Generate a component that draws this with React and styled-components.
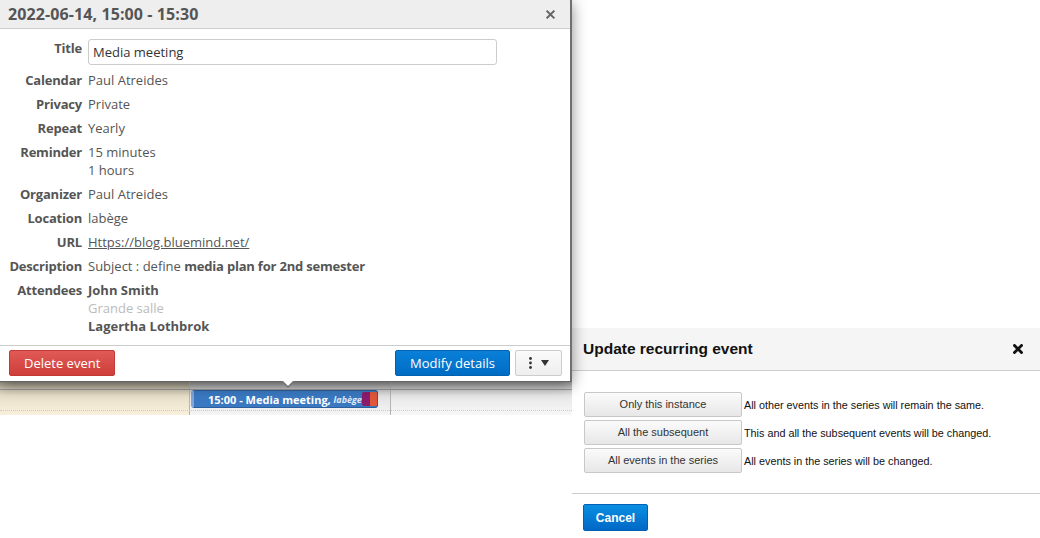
import React from 'react'
import styled, { createGlobalStyle } from 'styled-components'

const GlobalStyle = createGlobalStyle`
    html, body {
        margin: 0;
        padding: 0;
        background: #ffffff;
    }
    * {
        box-sizing: border-box;
    }
`

const Page = styled.div`
    display: flex;
    align-items: flex-start;
    width: 1040px;
    height: 538px;
    overflow: hidden;
`
const LeftCol = styled.div`
    width: 572px;
    display: flex;
    flex-direction: column;
`
const Popup = styled.div`
    position: relative;
    z-index: 2;
    width: 572px;
    background: #ffffff;
    border-right: 2px solid #707070;
    border-bottom: 1px solid #666666;
    box-shadow: 0 3px 14px rgba(0, 0, 0, 0.45);
    font-family: "Open Sans", sans-serif;
    font-size: 13px;
    color: #555555;
`
const PopupHeader = styled.div`
    height: 29px;
    display: flex;
    align-items: center;
    justify-content: space-between;
    padding: 0 15px 0 8px;
    background: #eeeeee;
    border-bottom: 1px solid #cccccc;
`
const PopupTitle = styled.div`
    font-size: 16px;
    font-weight: 700;
    color: #555555;
    letter-spacing: 0.1px;
`
const PopupBody = styled.div`
    display: grid;
    grid-template-columns: 82px 1fr;
    column-gap: 6px;
    row-gap: 6px;
    padding: 10px 0 10px;
`
const Label = styled.div`
    text-align: right;
    font-weight: 700;
    line-height: 18px;
    letter-spacing: -0.2px;
`
const Value = styled.div`
    line-height: 18px;
    display: flex;
    flex-direction: column;
`
const Line = styled.span`
    color: ${p => (p.$muted ? '#bbbbbb' : '#555555')};
    font-weight: ${p => (p.$bold ? 700 : 400)};
`
const Strong = styled.b`
    font-weight: 700;
    letter-spacing: -0.2px;
`
const Link = styled.a`
    color: #555555;
    text-decoration: underline;
`
const TitleInput = styled.input`
    width: 409px;
    height: 26px;
    border: 1px solid #cccccc;
    border-radius: 3px;
    padding: 0 4px;
    font-family: "Open Sans", sans-serif;
    font-size: 13px;
    color: #333333;
    outline: none;
`
const PopupFooter = styled.div`
    display: flex;
    align-items: center;
    gap: 5px;
    padding: 4px 8px 5px 9px;
    border-top: 1px solid #cccccc;
`
const Spacer = styled.div`
    flex: 1;
`
const ActionButton = styled.button`
    height: 26px;
    padding: 0 14px;
    border-radius: 2px;
    font-family: "Open Sans", sans-serif;
    font-size: 13px;
    color: #ffffff;
    cursor: pointer;
    border: 1px solid ${p => (p.$tone === 'danger' ? '#c23a36' : '#0061b0')};
    background: ${p => (p.$tone === 'danger'
        ? 'linear-gradient(#e05a56, #cf3e3a)'
        : 'linear-gradient(#0a80d8, #006cc4)')};
`
const MoreButton = styled.button`
    width: 47px;
    height: 26px;
    display: flex;
    align-items: center;
    justify-content: center;
    gap: 9px;
    border: 1px solid #cccccc;
    border-radius: 2px;
    background: linear-gradient(#fafafa, #eeeeee);
    padding: 0;
`
const Notch = styled.div`
    position: absolute;
    left: 281px;
    bottom: -7px;
    width: 0;
    height: 0;
    border-left: 7px solid transparent;
    border-right: 7px solid transparent;
    border-top: 7px solid #707070;
    &::after {
        content: '';
        position: absolute;
        left: -6px;
        top: -8px;
        border-left: 6px solid transparent;
        border-right: 6px solid transparent;
        border-top: 6px solid #ffffff;
    }
`
const CloseIcon = styled.svg`
    display: block;
`

const Strip = styled.div`
    position: relative;
    z-index: 1;
    height: 33px;
    display: grid;
    grid-template-columns: 190px 201px 1fr;
    &::before {
        content: '';
        position: absolute;
        left: 0;
        right: 0;
        top: 7px;
        border-top: 1px solid #9a9a9a;
    }
    &::after {
        content: '';
        position: absolute;
        left: 0;
        right: 0;
        top: 28px;
        border-top: 1px dotted #cccccc;
    }
`
const StripCell = styled.div`
    background: ${p => p.$bg};
    border-right: ${p => (p.$last ? 'none' : '1px solid #b5b5b5')};
    padding-top: 8px;
`
const EventChip = styled.div`
    position: relative;
    z-index: 1;
    margin-left: 1px;
    width: 187px;
    height: 18px;
    display: flex;
    align-items: center;
    border: 1px solid #2b5f9c;
    border-left: 3px solid #7fa6d6;
    border-radius: 3px;
    background: #3a79c2;
    color: #ffffff;
    font-family: "Open Sans", sans-serif;
    font-size: 11px;
    font-weight: 700;
    padding-left: 14px;
    white-space: nowrap;
    overflow: hidden;
`
const ChipPlace = styled.i`
    font-size: 9px;
    font-weight: 700;
    opacity: 0.85;
`
const ChipColors = styled.div`
    margin-left: auto;
    display: flex;
    height: 14px;
    margin-right: 1px;
`
const ChipColor = styled.div`
    width: 8px;
    height: 14px;
    background: ${p => p.$color};
    border-radius: ${p => (p.$last ? '0 2px 2px 0' : '2px 0 0 2px')};
`

const Dialog = styled.div`
    flex: 1;
    margin-top: 328px;
    background: #ffffff;
    font-family: "Liberation Sans", Arial, sans-serif;
`
const DialogHeader = styled.div`
    height: 43px;
    display: flex;
    align-items: center;
    justify-content: space-between;
    padding: 0 17px 0 11px;
    background: #f5f5f5;
    border-bottom: 1px solid #cccccc;
`
const DialogTitle = styled.div`
    font-size: 15.5px;
    font-weight: 700;
    color: #111111;
`
const DialogBody = styled.div`
    display: flex;
    flex-direction: column;
    gap: 3px;
    padding: 21px 12px 20px;
`
const ChoiceRow = styled.div`
    display: flex;
    align-items: center;
    gap: 2px;
`
const ChoiceButton = styled.button`
    width: 158px;
    height: 25px;
    border: 1px solid #c8c8c8;
    border-radius: 2px;
    background: linear-gradient(#fbfbfb, #e7e7e7);
    font-family: "Liberation Sans", Arial, sans-serif;
    font-size: 11px;
    color: #333333;
    padding: 0 0 2px;
`
const ChoiceText = styled.span`
    font-size: 10.8px;
    color: #111111;
`
const DialogFooter = styled.div`
    padding: 10px 11px 7px;
    border-top: 1px solid #cccccc;
`
const CancelButton = styled.button`
    width: 65px;
    height: 27px;
    border: 1px solid #0060b6;
    border-radius: 2px;
    background: linear-gradient(#0b8fe2, #0068c6);
    color: #ffffff;
    font-family: "Liberation Sans", Arial, sans-serif;
    font-size: 12px;
    font-weight: 700;
`

const Cross = ({ size, stroke, color }) => (
    <CloseIcon width={size} height={size} viewBox="0 0 10 10">
        <path d="M1.5 1.5 L8.5 8.5 M8.5 1.5 L1.5 8.5" stroke={color} strokeWidth={stroke} strokeLinecap="square" />
    </CloseIcon>
)

const details = [
    { label: 'Calendar', lines: ['Paul Atreides'] },
    { label: 'Privacy', lines: ['Private'] },
    { label: 'Repeat', lines: ['Yearly'] },
    { label: 'Reminder', lines: ['15 minutes', '1 hours'] },
    { label: 'Organizer', lines: ['Paul Atreides'] },
    { label: 'Location', lines: ['labège'] },
]

const choices = [
    { name: 'Only this instance', text: 'All other events in the series will remain the same.' },
    { name: 'All the subsequent', text: 'This and all the subsequent events will be changed.' },
    { name: 'All events in the series', text: 'All events in the series will be changed.' },
]

const App = () => {
    return (
        <Page>
            <GlobalStyle />
            <LeftCol>
                <Popup>
                    <PopupHeader>
                        <PopupTitle>2022-06-14, 15:00 - 15:30</PopupTitle>
                        <Cross size={9} stroke={2.2} color="#666666" />
                    </PopupHeader>
                    <PopupBody>
                        <Label>Title</Label>
                        <Value>
                            <TitleInput defaultValue="Media meeting" />
                        </Value>
                        {details.map(item => (
                            <React.Fragment key={item.label}>
                                <Label>{item.label}</Label>
                                <Value>
                                    {item.lines.map(l => <Line key={l}>{l}</Line>)}
                                </Value>
                            </React.Fragment>
                        ))}
                        <Label>URL</Label>
                        <Value>
                            <Line><Link href="#">Https://blog.bluemind.net/</Link></Line>
                        </Value>
                        <Label>Description</Label>
                        <Value>
                            <Line>Subject : define <Strong>media plan for 2nd semester</Strong></Line>
                        </Value>
                        <Label>Attendees</Label>
                        <Value>
                            <Line $bold>John Smith</Line>
                            <Line $muted>Grande salle</Line>
                            <Line $bold>Lagertha Lothbrok</Line>
                        </Value>
                    </PopupBody>
                    <PopupFooter>
                        <ActionButton $tone="danger">Delete event</ActionButton>
                        <Spacer />
                        <ActionButton $tone="primary">Modify details</ActionButton>
                        <MoreButton>
                            <svg width="3" height="12" viewBox="0 0 3 12">
                                <circle cx="1.5" cy="1.5" r="1.4" fill="#333" />
                                <circle cx="1.5" cy="6" r="1.4" fill="#333" />
                                <circle cx="1.5" cy="10.5" r="1.4" fill="#333" />
                            </svg>
                            <svg width="8" height="6" viewBox="0 0 8 6">
                                <path d="M0 0 L8 0 L4 6 Z" fill="#333" />
                            </svg>
                        </MoreButton>
                    </PopupFooter>
                    <Notch />
                </Popup>
                <Strip>
                    <StripCell $bg="linear-gradient(#9f9a8b, #cdc6b1 7px, #e8e0ca 14px, #f8f0dc)" />
                    <StripCell $bg="linear-gradient(#9c9c9c, #c9c9c9 7px, #e4e4e4 14px, #f5f5f5)">
                        <EventChip>
                            15:00 - Media meeting,&nbsp;<ChipPlace>labège</ChipPlace>
                            <ChipColors>
                                <ChipColor $color="#8a1c6c" />
                                <ChipColor $color="#e0583c" $last />
                            </ChipColors>
                        </EventChip>
                    </StripCell>
                    <StripCell $last $bg="linear-gradient(#a3a3a3, #cdcdcd 7px, #e8e8e8 14px, #f7f7f7)" />
                </Strip>
            </LeftCol>
            <Dialog>
                <DialogHeader>
                    <DialogTitle>Update recurring event</DialogTitle>
                    <Cross size={10} stroke={2.8} color="#111111" />
                </DialogHeader>
                <DialogBody>
                    {choices.map(c => (
                        <ChoiceRow key={c.name}>
                            <ChoiceButton>{c.name}</ChoiceButton>
                            <ChoiceText>{c.text}</ChoiceText>
                        </ChoiceRow>
                    ))}
                </DialogBody>
                <DialogFooter>
                    <CancelButton>Cancel</CancelButton>
                </DialogFooter>
            </Dialog>
        </Page>
    )
}

export default App
